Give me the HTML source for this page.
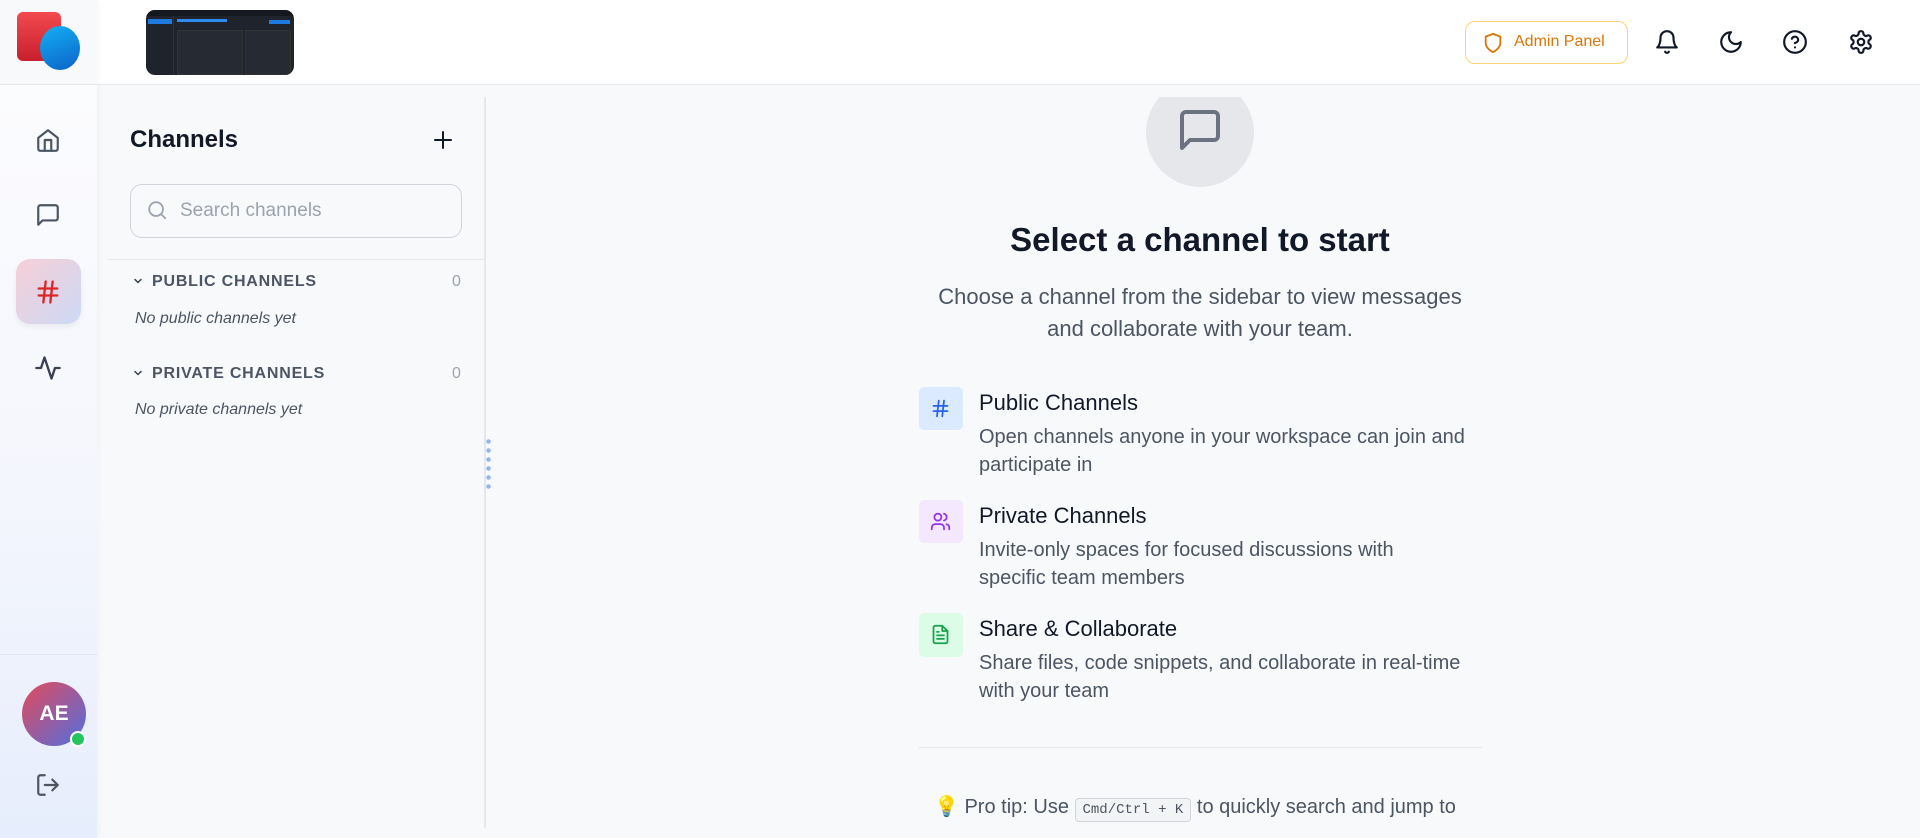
<!DOCTYPE html>
<html><head><meta charset="utf-8"><style>
*{box-sizing:border-box;margin:0;padding:0}
body{width:1920px;height:838px;overflow:hidden;background:#f8f9fb;font-family:"Liberation Sans",sans-serif;position:relative;color:#111827}
.abs{position:absolute}
svg{display:block}
</style></head><body>
<!-- header -->
<div class="abs" style="left:0;top:0;width:1920px;height:85px;background:#fff;border-bottom:1px solid #e5e7eb"></div>
<!-- left rail -->
<div class="abs" style="left:0;top:0;width:97px;height:838px;background:linear-gradient(#fdfdfe,#f4f6fd 60%,#e6edfc);box-shadow:2px 0 6px rgba(0,0,0,0.03)"></div>
<div class="abs" style="left:0;top:0;width:97px;height:85px;background:#f8f9fa;border-bottom:1px solid #e5e7eb"></div>
<div class="abs" style="left:17px;top:12px;width:44px;height:49px;border-radius:6px;background:linear-gradient(#f24a4f,#c81f2d)"></div>
<div class="abs" style="left:40px;top:26px;width:40px;height:44px;border-radius:50%;background:linear-gradient(160deg,#13b0f5,#0b63c8)"></div>
<!-- thumbnail -->
<div class="abs" style="left:146px;top:10px;width:148px;height:65px;border-radius:9px;background:#1f242c;overflow:hidden">
 <div class="abs" style="left:0;top:0;width:148px;height:6px;background:#15181d"></div>
 <div class="abs" style="left:2px;top:9px;width:24px;height:5px;background:#1f7ae0"></div>
 <div class="abs" style="left:27px;top:6px;width:1px;height:59px;background:#333"></div>
 <div class="abs" style="left:31px;top:9px;width:50px;height:3px;background:#2d8cf0"></div>
 <div class="abs" style="left:123px;top:10px;width:21px;height:4px;background:#1f7ae0"></div>
 <div class="abs" style="left:31px;top:20px;width:66px;height:45px;background:#262b33;border:1px solid #333"></div>
 <div class="abs" style="left:99px;top:20px;width:46px;height:45px;background:#262b33;border:1px solid #333"></div>
</div>
<!-- header right -->
<div class="abs" style="left:1465px;top:21px;width:163px;height:43px;border:1px solid #fcd472;border-radius:10px;background:#fff"></div>
<svg class="abs" style="left:1482px;top:31px" width="22" height="24" viewBox="0 0 24 24" fill="none" stroke="#d97706" stroke-width="2" stroke-linecap="round" stroke-linejoin="round"><path d="M12 22s8-4 8-10V5l-8-3-8 3v7c0 6 8 10 8 10z"/></svg>
<div class="abs" style="left:1514px;top:31px;font-size:16px;color:#d97706;line-height:22px">Admin Panel</div>
<svg class="abs" style="left:1654px;top:29px" width="26" height="26" viewBox="0 0 24 24" fill="none" stroke="#111827" stroke-width="2" stroke-linecap="round" stroke-linejoin="round"><path d="M6 8a6 6 0 0 1 12 0c0 7 3 9 3 9H3s3-2 3-9"/><path d="M10.3 21a1.94 1.94 0 0 0 3.4 0"/></svg>
<svg class="abs" style="left:1718px;top:29px" width="26" height="26" viewBox="0 0 24 24" fill="none" stroke="#111827" stroke-width="2" stroke-linecap="round" stroke-linejoin="round"><path d="M12 3a6 6 0 0 0 9 9 9 9 0 1 1-9-9z"/></svg>
<svg class="abs" style="left:1782px;top:29px" width="26" height="26" viewBox="0 0 24 24" fill="none" stroke="#111827" stroke-width="2" stroke-linecap="round" stroke-linejoin="round"><circle cx="12" cy="12" r="10"/><path d="M9.1 9a3 3 0 0 1 5.8 1c0 2-3 3-3 3"/><path d="M12 17h.01"/></svg>
<svg class="abs" style="left:1848px;top:29px" width="26" height="26" viewBox="0 0 24 24" fill="none" stroke="#111827" stroke-width="2" stroke-linecap="round" stroke-linejoin="round"><path d="M12.22 2h-.44a2 2 0 0 0-2 2v.18a2 2 0 0 1-1 1.73l-.43.25a2 2 0 0 1-2 0l-.15-.08a2 2 0 0 0-2.73.73l-.22.38a2 2 0 0 0 .73 2.73l.15.1a2 2 0 0 1 1 1.72v.51a2 2 0 0 1-1 1.74l-.15.09a2 2 0 0 0-.73 2.73l.22.38a2 2 0 0 0 2.73.73l.15-.08a2 2 0 0 1 2 0l.43.25a2 2 0 0 1 1 1.73V20a2 2 0 0 0 2 2h.44a2 2 0 0 0 2-2v-.18a2 2 0 0 1 1-1.73l.43-.25a2 2 0 0 1 2 0l.15.08a2 2 0 0 0 2.73-.73l.22-.39a2 2 0 0 0-.73-2.73l-.15-.08a2 2 0 0 1-1-1.74v-.5a2 2 0 0 1 1-1.74l.15-.09a2 2 0 0 0 .73-2.73l-.22-.38a2 2 0 0 0-2.73-.73l-.15.08a2 2 0 0 1-2 0l-.43-.25a2 2 0 0 1-1-1.73V4a2 2 0 0 0-2-2z"/><circle cx="12" cy="12" r="3"/></svg>
<!-- rail icons -->
<svg class="abs" style="left:35px;top:127px" width="26" height="26" viewBox="0 0 24 24" fill="none" stroke="#4b5563" stroke-width="2" stroke-linecap="round" stroke-linejoin="round"><path d="M3 10l9-7 9 7v10a2 2 0 0 1-2 2H5a2 2 0 0 1-2-2z"/><path d="M9 22V12h6v10"/></svg>
<svg class="abs" style="left:35px;top:202px" width="26" height="26" viewBox="0 0 24 24" fill="none" stroke="#4b5563" stroke-width="2" stroke-linecap="round" stroke-linejoin="round"><path d="M21 15a2 2 0 0 1-2 2H7l-4 4V5a2 2 0 0 1 2-2h14a2 2 0 0 1 2 2z"/></svg>
<div class="abs" style="left:16px;top:259px;width:65px;height:65px;border-radius:14px;background:linear-gradient(135deg,#f6cfd6,#cdd9f6);box-shadow:0 3px 6px rgba(0,0,0,0.06)"></div>
<svg class="abs" style="left:34px;top:278px" width="28" height="28" viewBox="0 0 24 24" fill="none" stroke="#dc2626" stroke-width="2" stroke-linecap="round"><path d="M4 9h16M4 15h16M10 3L8 21M16 3l-2 18"/></svg>
<svg class="abs" style="left:34px;top:354px" width="28" height="28" viewBox="0 0 24 24" fill="none" stroke="#374151" stroke-width="2" stroke-linecap="round" stroke-linejoin="round"><path d="M22 12h-4l-3 9L9 3l-3 9H2"/></svg>
<div class="abs" style="left:0;top:654px;width:97px;height:1px;background:#e2e6ee"></div>
<div class="abs" style="left:22px;top:682px;width:64px;height:64px;border-radius:50%;background:linear-gradient(135deg,#e44a5a,#4f6fe0);color:#fff;font-weight:bold;font-size:21px;text-align:center;line-height:64px">AE</div>
<div class="abs" style="left:70px;top:731px;width:16px;height:16px;border-radius:50%;background:#22c55e;border:2px solid #fff"></div>
<svg class="abs" style="left:35px;top:772px" width="26" height="26" viewBox="0 0 24 24" fill="none" stroke="#4b5563" stroke-width="2" stroke-linecap="round" stroke-linejoin="round"><path d="M9 21H5a2 2 0 0 1-2-2V5a2 2 0 0 1 2-2h4"/><path d="M16 17l5-5-5-5M21 12H9"/></svg>
<!-- channels sidebar -->
<div class="abs" style="left:484px;top:97px;width:2px;height:731px;background:#e5e7eb"></div>
<div class="abs" style="left:130px;top:125px;font-size:24px;font-weight:bold;color:#111827;line-height:30px">Channels</div>
<svg class="abs" style="left:431px;top:128px" width="24" height="24" viewBox="0 0 24 24" fill="none" stroke="#111827" stroke-width="2" stroke-linecap="round"><path d="M12 4v16M4 12h16"/></svg>
<div class="abs" style="left:130px;top:184px;width:332px;height:54px;border:1px solid #d1d5db;border-radius:12px;background:#f8f9fb"></div>
<svg class="abs" style="left:146px;top:199px" width="22" height="22" viewBox="0 0 24 24" fill="none" stroke="#9ca3af" stroke-width="2" stroke-linecap="round"><circle cx="11" cy="11" r="7.5"/><path d="M21 21l-4.5-4.5"/></svg>
<div class="abs" style="left:180px;top:199px;font-size:19px;color:#9ca3af;line-height:24px">Search channels</div>
<div class="abs" style="left:108px;top:259px;width:377px;height:1px;background:#e5e7eb"></div>
<svg class="abs" style="left:132px;top:275px" width="12" height="12" viewBox="0 0 24 24" fill="none" stroke="#374151" stroke-width="3" stroke-linecap="round" stroke-linejoin="round"><path d="M6 9l6 6 6-6"/></svg>
<div class="abs" style="left:152px;top:272px;font-size:16px;font-weight:bold;color:#4b5563;letter-spacing:0.8px;line-height:20px">PUBLIC CHANNELS</div>
<div class="abs" style="left:452px;top:272px;font-size:16px;color:#9ca3af;line-height:20px">0</div>
<div class="abs" style="left:135px;top:309px;font-size:16px;font-style:italic;color:#4b5563;line-height:20px">No public channels yet</div>
<svg class="abs" style="left:132px;top:367px" width="12" height="12" viewBox="0 0 24 24" fill="none" stroke="#374151" stroke-width="3" stroke-linecap="round" stroke-linejoin="round"><path d="M6 9l6 6 6-6"/></svg>
<div class="abs" style="left:152px;top:364px;font-size:16px;font-weight:bold;color:#4b5563;letter-spacing:0.8px;line-height:20px">PRIVATE CHANNELS</div>
<div class="abs" style="left:452px;top:364px;font-size:16px;color:#9ca3af;line-height:20px">0</div>
<div class="abs" style="left:135px;top:400px;font-size:16px;font-style:italic;color:#4b5563;line-height:20px">No private channels yet</div>
<div class="abs" style="left:486px;top:437px;width:5px;height:52px;background:radial-gradient(circle,#93b4f0 2px,transparent 2.5px) 0 0/5px 9px repeat-y"></div>
<!-- main -->
<div class="abs" style="left:1146px;top:79px;width:108px;height:108px;border-radius:50%;background:#e5e7eb;clip-path:inset(18px 0 0 0)"></div>
<svg class="abs" style="left:1176px;top:106px" width="48" height="48" viewBox="0 0 24 24" fill="none" stroke="#6b7280" stroke-width="2" stroke-linecap="round" stroke-linejoin="round"><path d="M21 15a2 2 0 0 1-2 2H7l-4 4V5a2 2 0 0 1 2-2h14a2 2 0 0 1 2 2z"/></svg>
<div class="abs" style="left:850px;top:220px;width:700px;text-align:center;font-size:33px;font-weight:bold;color:#111827;line-height:40px">Select a channel to start</div>
<div class="abs" style="left:850px;top:281px;width:700px;text-align:center;font-size:22px;color:#4b5563;line-height:32px">Choose a channel from the sidebar to view messages<br>and collaborate with your team.</div>
<div class="abs" style="left:919px;top:387px;width:44px;height:43px;border-radius:5px;background:#dbeafe"></div>
<svg class="abs" style="left:930px;top:398px" width="21" height="21" viewBox="0 0 24 24" fill="none" stroke="#2563eb" stroke-width="2" stroke-linecap="round"><path d="M4 9h16M4 15h16M10 3L8 21M16 3l-2 18"/></svg>
<div class="abs" style="left:979px;top:389px;font-size:22px;color:#111827;line-height:28px">Public Channels</div>
<div class="abs" style="left:979px;top:423px;font-size:20px;color:#4b5563;line-height:28px;width:498px">Open channels anyone in your workspace can join and participate in</div>
<div class="abs" style="left:919px;top:500px;width:44px;height:43px;border-radius:5px;background:#f3e8ff"></div>
<svg class="abs" style="left:930px;top:511px" width="21" height="21" viewBox="0 0 24 24" fill="none" stroke="#9333ea" stroke-width="2" stroke-linecap="round" stroke-linejoin="round"><path d="M16 21v-2a4 4 0 0 0-4-4H6a4 4 0 0 0-4 4v2"/><circle cx="9" cy="7" r="4"/><path d="M22 21v-2a4 4 0 0 0-3-3.87M16 3.13a4 4 0 0 1 0 7.75"/></svg>
<div class="abs" style="left:979px;top:502px;font-size:22px;color:#111827;line-height:28px">Private Channels</div>
<div class="abs" style="left:979px;top:536px;font-size:20px;color:#4b5563;line-height:28px;width:470px">Invite-only spaces for focused discussions with specific team members</div>
<div class="abs" style="left:919px;top:613px;width:44px;height:44px;border-radius:5px;background:#dcfce7"></div>
<svg class="abs" style="left:930px;top:624px" width="21" height="21" viewBox="0 0 24 24" fill="none" stroke="#16a34a" stroke-width="2" stroke-linecap="round" stroke-linejoin="round"><path d="M14 2H6a2 2 0 0 0-2 2v16a2 2 0 0 0 2 2h12a2 2 0 0 0 2-2V8z"/><path d="M14 2v6h6M16 13H8M16 17H8M10 9H8"/></svg>
<div class="abs" style="left:979px;top:615px;font-size:22px;color:#111827;line-height:28px">Share &amp; Collaborate</div>
<div class="abs" style="left:979px;top:649px;font-size:20px;color:#4b5563;line-height:28px;width:498px">Share files, code snippets, and collaborate in real-time with your team</div>
<div class="abs" style="left:919px;top:747px;width:563px;height:1px;background:#e5e7eb"></div>
<div class="abs" style="left:934px;top:793px;font-size:20px;color:#4b5563;line-height:28px;white-space:nowrap">💡 Pro tip: Use <span style="font-family:'Liberation Mono',monospace;font-size:14px;border:1px solid #d1d5db;background:#f3f4f6;border-radius:4px;padding:3px 7px">Cmd/Ctrl + K</span> to quickly search and jump to</div>
</body></html>
